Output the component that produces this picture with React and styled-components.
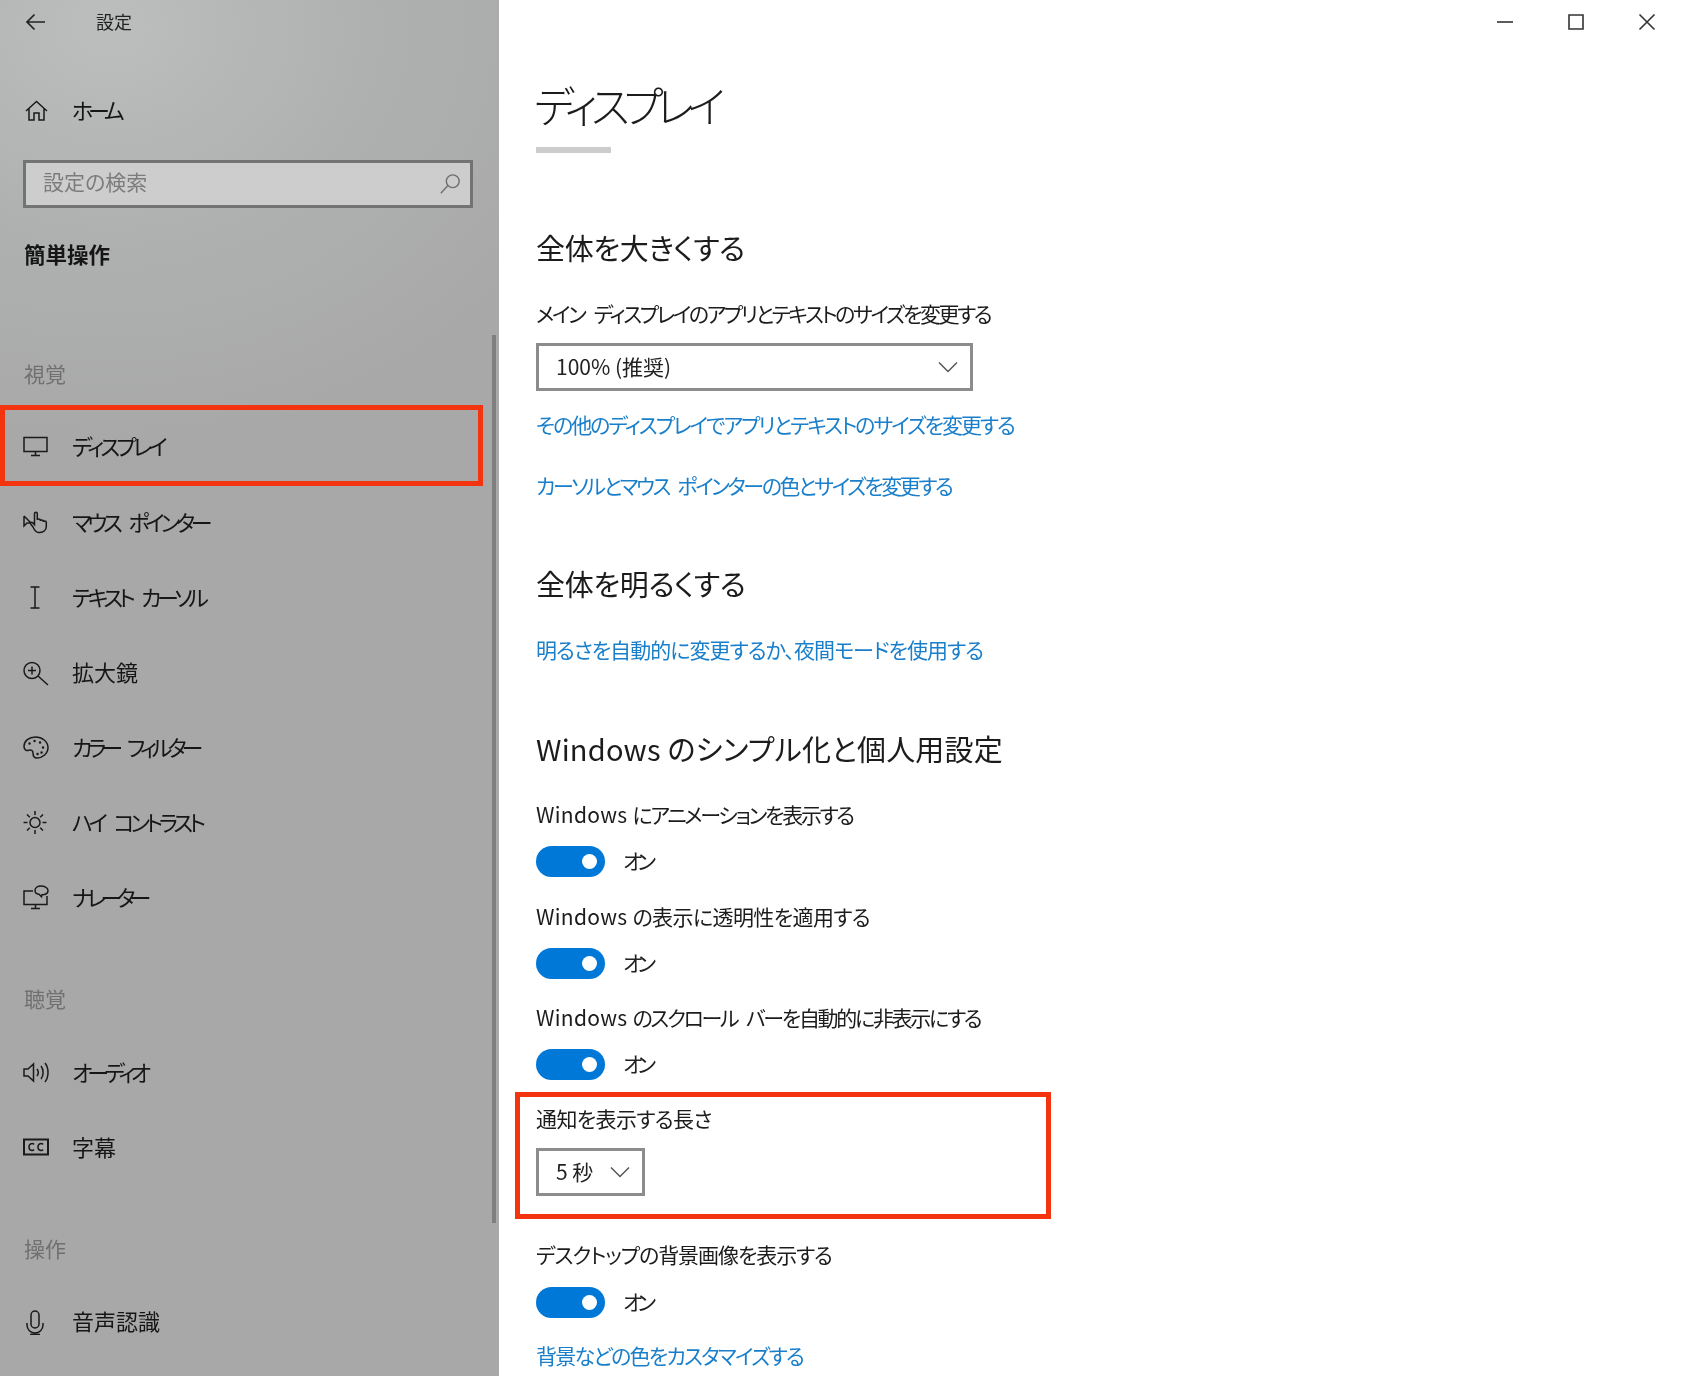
import React from "react";
import styled, { createGlobalStyle } from "styled-components";

const Global = createGlobalStyle`
  html, body { margin: 0; padding: 0; background: #fff; }
  body {
    font-family: "Noto Sans CJK JP", "Noto Sans", sans-serif;
    font-feature-settings: "palt" 1;
    color: #1c1c1c;
    overflow: hidden;
  }
`;

const Page = styled.div`
  display: flex;
  width: 1681px;
  height: 1376px;
  overflow: hidden;
  filter: blur(0.45px);
`;

const Sidebar = styled.aside`
  position: relative;
  flex: 0 0 499px;
  display: flex;
  flex-direction: column;
  background: radial-gradient(ellipse 520px 420px at 22% 2%, #bcbebe 0%, #afb0b0 50%, #a8a8a8 100%), #a8a8a8;
`;

const Scrollbar = styled.div`
  position: absolute;
  left: 492px;
  top: 335px;
  width: 4px;
  height: 888px;
  background: #7f7f7f;
`;

const SideHeader = styled.div`
  display: flex;
  align-items: center;
  height: 43px;
  padding-left: 25px;
  font-size: 18px;
  color: #222;
`;

const HeaderTitle = styled.span`
  margin-left: 49px;
  padding-bottom: 2px;
`;

const NavRow = styled.div`
  display: flex;
  align-items: center;
  box-sizing: border-box;
  height: ${(p) => (p.$marked ? "81px" : "75px")};
  width: ${(p) => (p.$marked ? "483px" : "auto")};
  margin-top: ${(p) => p.$top || 0}px;
  margin-bottom: ${(p) => (p.$marked ? -1 : 0)}px;
  padding-left: ${(p) => (p.$marked ? "18px" : "23px")};
  border: ${(p) => (p.$marked ? "5px solid #f4340f" : "none")};
  font-size: 22px;
  color: #161616;
`;

const NavLabel = styled.span`
  padding-bottom: ${(p) => (p.$marked ? 2 : 4)}px;
  letter-spacing: ${(p) => p.$track || 0}px;
  word-spacing: 9px;
`;

const NavIcon = styled.svg`
  flex: 0 0 26px;
  width: 26px;
  height: 26px;
  margin-right: 23px;
  fill: none;
  stroke: #1a1a1a;
  stroke-width: 1.5;
`;

const SearchBox = styled.div`
  display: flex;
  align-items: center;
  justify-content: space-between;
  box-sizing: border-box;
  height: 48px;
  width: 450px;
  margin: 12px 0 0 23px;
  padding: 0 9px 0 17px;
  border: 3px solid #737373;
  background: #cdcdcd;
  font-size: 21px;
  color: #7c7c7c;
`;

const SearchText = styled.span`
  padding-bottom: 6px;
`;

const SearchIcon = styled.svg`
  width: 22px;
  height: 22px;
  fill: none;
  stroke: #6f6f6f;
  stroke-width: 1.5;
`;

const Group = styled.div`
  height: 30px;
  line-height: 28px;
  margin: ${(p) => p.$top}px 0 0 24px;
  font-size: ${(p) => (p.$strong ? 21.5 : 21)}px;
  font-weight: ${(p) => (p.$strong ? 700 : 400)};
  color: ${(p) => (p.$strong ? "#161616" : "#707070")};
`;

const Main = styled.main`
  flex: 1;
  display: flex;
  flex-direction: column;
  align-items: flex-start;
  padding-left: 37px;
  background: #fff;
`;

const TitleBar = styled.div`
  align-self: stretch;
  display: flex;
  justify-content: flex-end;
  align-items: center;
  height: 43px;
  padding-right: 25px;
  gap: 53px;
`;

const WinIcon = styled.svg`
  width: 18px;
  height: 18px;
  fill: none;
  stroke: #333;
  stroke-width: 1.6;
`;

const PageTitle = styled.h1`
  height: 60px;
  line-height: 54px;
  margin: 34px 0 0 -2px;
  font-size: 43px;
  font-weight: 300;
  letter-spacing: -6.6px;
  color: #1c1c1c;
`;

const TitleRule = styled.div`
  width: 75px;
  height: 6px;
  margin-top: 10px;
  background: #cccccc;
`;

const Heading = styled.h2`
  height: 36px;
  line-height: 32px;
  margin: ${(p) => p.$top}px 0 0;
  font-size: 29px;
  font-weight: 400;
  letter-spacing: ${(p) => p.$track || 0}px;
  color: #1c1c1c;
`;

const Label = styled.div`
  height: 28px;
  line-height: 26px;
  margin-top: ${(p) => p.$top}px;
  font-size: 21px;
  letter-spacing: ${(p) => p.$track || 0}px;
  word-spacing: ${(p) => p.$word || 0}px;
  color: #1c1c1c;
`;

const Latin = styled.span`
  letter-spacing: 0.3px;
  word-spacing: 0;
`;

const LinkText = styled.a`
  display: block;
  height: 28px;
  line-height: 25px;
  margin-top: ${(p) => p.$top}px;
  font-size: 21px;
  letter-spacing: ${(p) => p.$track || 0}px;
  word-spacing: ${(p) => p.$word || 0}px;
  color: #1a7fca;
`;

const Select = styled.div`
  display: flex;
  align-items: center;
  justify-content: space-between;
  box-sizing: border-box;
  width: ${(p) => p.$width}px;
  height: 48px;
  margin-top: 15px;
  padding: 0 12px 0 17px;
  border: 3px solid #8c8c8c;
  font-size: 21px;
  color: #222;
`;

const SelectText = styled.span`
  padding-bottom: 2px;
`;

const Chevron = styled.svg`
  flex: none;
  width: 20px;
  height: 12px;
  fill: none;
  stroke: #555;
  stroke-width: 1.5;
`;

const ToggleRow = styled.div`
  display: flex;
  align-items: center;
  height: 31px;
  margin-top: ${(p) => p.$top || 17}px;
  font-size: 21px;
  color: #222;
`;

const ToggleText = styled.span`
  margin-left: -1px;
  padding-bottom: 4px;
  letter-spacing: -5px;
`;

const Track = styled.span`
  position: relative;
  display: block;
  width: 69px;
  height: 31px;
  margin-right: 19px;
  border-radius: 16px;
  background: #0078d7;
`;

const Knob = styled.span`
  position: absolute;
  right: 8px;
  top: 8px;
  width: 15px;
  height: 15px;
  border-radius: 50%;
  background: #fff;
`;

const MarkedBox = styled.section`
  box-sizing: border-box;
  width: 536px;
  margin: 12px 0 0 -21px;
  padding: 8px 0 18px 16px;
  border: 5px solid #f4340f;
`;

const Icons = {
  home: <path d="M3 13 13.500 3.500 24 13M6 10.500V22h5v-7h5v7h5V10.500" />,
  display: <path d="M1 4.500h23v14H1zM12.500 18.500v3.500M8 22.500h9" />,
  mouse: (
    <path d="M1 6v10l3-3h3M1 6l7 7M10 17l-2.300-3c-.8-1.200.7-2.400 1.800-1.400l2 2V3.500c0-1.600 2.800-1.600 2.800 0V10c0-1.500 3-1.500 3 0v1c0-1.400 3-1.400 3 0v1c0-1.300 3-1.300 3 .2v4.300c0 3.500-2.800 6-6.300 6h-1.500c-2.700 0-3.800-1.800-5.500-5.500z" />
  ),
  cursor: <path d="M12 2v21M7.500 2h9M7.500 23h9" />,
  zoom: <path d="M17 10.500a8 8 0 1 1-16 0 8 8 0 0 1 16 0zM15 16l10 9M9 6.500v8M5 10.500h8" />,
  palette: (
    <>
      <path d="M12.500 2C6 2 1 6 1 11.500c0 3 2.500 4.500 4.500 3.800 2.500-.8 4.500.2 4.500 2.700 0 3 1.500 5 4 5 5.500 0 11-4.500 11-10.500S19 2 12.500 2z" />
      <path strokeWidth="2.400" strokeLinecap="round" d="M6.500 8.500h.1M11.500 6h.1M17 7.500h.1M20 12.500h.1M18.500 17.500h.1M14.500 19h.1" />
    </>
  ),
  sun: (
    <>
      <circle cx="12" cy="12.500" r="5" />
      <path d="M12 1v4M12 20v4M.5 12.500h4M19.500 12.500h4M4 4.500l2.800 2.800M17.200 17.700l2.800 2.800M20 4.500l-2.800 2.800M6.800 17.700 4 20.500" />
    </>
  ),
  narrator: (
    <path d="M10 6H1v13.500h23V11M12.500 19.500V23M8 23.500h9M12 5.500c0-3 3-4.500 6-4.500s7 1.500 7 4.500-3 4.200-6 4.200l-.5 2-2.500-2.500C13.500 9 12 8 12 5.500z" />
  ),
  audio: (
    <path d="M1 9v7h4l5.500 5V4L5 9zM14 9c1.500 2 1.500 5 0 7M18 6c2.800 3.500 2.800 9.500 0 13M22 3c4 5 4 14 0 19" />
  ),
  cc: (
    <>
      <path strokeWidth="2" d="M1 4.500h24v15H1z" />
      <path d="M11 9.500c-1-1.500-5-1.500-5 2.500s4 4 5 2.500M20 9.500c-1-1.500-5-1.500-5 2.500s4 4 5 2.500" />
    </>
  ),
  mic: (
    <path d="M8 6a4 4 0 0 1 8 0v9a4 4 0 0 1-8 0zM4 14v2a8 8 0 0 0 16 0v-2M12 24v2M7 25.500h10" />
  ),
};

function NavItem({ icon, label, top, marked, track }) {
  return (
    <NavRow $top={top} $marked={marked}>
      <NavIcon viewBox="0 0 26 26">{Icons[icon]}</NavIcon>
      <NavLabel $track={track} $marked={marked}>{label}</NavLabel>
    </NavRow>
  );
}

function Toggle({ top }) {
  return (
    <ToggleRow $top={top}>
      <Track>
        <Knob />
      </Track>
      <ToggleText>オン</ToggleText>
    </ToggleRow>
  );
}

function Caret() {
  return (
    <Chevron viewBox="0 0 20 12">
      <path d="M1 1.500l9 9 9-9" />
    </Chevron>
  );
}

export default function App() {
  return (
    <Page>
      <Global />
      <Sidebar>
        <SideHeader>
          <svg width="22" height="18" viewBox="0 0 22 18" fill="none" stroke="#222" strokeWidth="1.7">
            <path d="M20 9H2M9.500 1.500 2 9l7.500 7.500" />
          </svg>
          <HeaderTitle>設定</HeaderTitle>
        </SideHeader>
        <NavItem icon="home" label="ホーム" top={30} track={-5.2} />
        <SearchBox>
          <SearchText>設定の検索</SearchText>
          <SearchIcon viewBox="0 0 24 24">
            <path d="M22 9a7 7 0 1 1-14 0 7 7 0 0 1 14 0zM9.500 14 2 22" />
          </SearchIcon>
        </SearchBox>
        <Group $top={32} $strong>簡単操作</Group>
        <Group $top={89}>視覚</Group>
        <NavItem icon="display" label="ディスプレイ" top={16} marked track={-3.8} />
        <NavItem icon="mouse" label="マウス ポインター" track={-4.2} />
        <NavItem icon="cursor" label="テキスト カーソル" track={-4.3} />
        <NavItem icon="zoom" label="拡大鏡" />
        <NavItem icon="palette" label="カラー フィルター" track={-5} />
        <NavItem icon="sun" label="ハイ コントラスト" track={-4.1} />
        <NavItem icon="narrator" label="ナレーター" track={-5.9} />
        <Group $top={49}>聴覚</Group>
        <NavItem icon="audio" label="オーディオ" top={21} track={-4.8} />
        <NavItem icon="cc" label="字幕" />
        <Group $top={49}>操作</Group>
        <NavItem icon="mic" label="音声認識" top={20} />
        <Scrollbar />
      </Sidebar>
      <Main>
        <TitleBar>
          <WinIcon viewBox="0 0 18 18"><path d="M1 9h16" /></WinIcon>
          <WinIcon viewBox="0 0 18 18"><path d="M2 2h14v14H2z" /></WinIcon>
          <WinIcon viewBox="0 0 18 18"><path d="M1.500 1.500l15 15M16.500 1.500l-15 15" /></WinIcon>
        </TitleBar>
        <PageTitle>ディスプレイ</PageTitle>
        <TitleRule />
        <Heading $top={78} $track={-0.3}>全体を大きくする</Heading>
        <Label $top={33} $track={-2.4} $word={7}>メイン ディスプレイのアプリとテキストのサイズを変更する</Label>
        <Select $width={437}>
          <SelectText>100% (推奨)</SelectText>
          <Caret />
        </Select>
        <LinkText $top={21} $track={-2}>その他のディスプレイでアプリとテキストのサイズを変更する</LinkText>
        <LinkText $top={33} $track={-2.4} $word={6}>カーソルとマウス ポインターの色とサイズを変更する</LinkText>
        <Heading $top={66} $track={-0.3}>全体を明るくする</Heading>
        <LinkText $top={34} $track={-0.95}>明るさを自動的に変更するか、夜間モードを使用する</LinkText>
        <Heading $top={67} $track={0.2}>Windows のシンプル化と個人用設定</Heading>
        <Label $top={33} $track={-2.3}><Latin>Windows </Latin>にアニメーションを表示する</Label>
        <Toggle />
        <Label $top={26} $track={-0.6}><Latin>Windows </Latin>の表示に透明性を適用する</Label>
        <Toggle />
        <Label $top={25} $track={-2.3} $word={6}><Latin>Windows </Latin>のスクロール バーを自動的に非表示にする</Label>
        <Toggle />
        <MarkedBox>
          <Label $top={0} $track={-0.6}>通知を表示する長さ</Label>
          <Select $width={109}>
            <SelectText>5 秒</SelectText>
            <Caret />
          </Select>
        </MarkedBox>
        <Label $top={22} $track={-1.07}>デスクトップの背景画像を表示する</Label>
        <Toggle top={18} />
        <LinkText $top={25} $track={-1.75}>背景などの色をカスタマイズする</LinkText>
      </Main>
    </Page>
  );
}
